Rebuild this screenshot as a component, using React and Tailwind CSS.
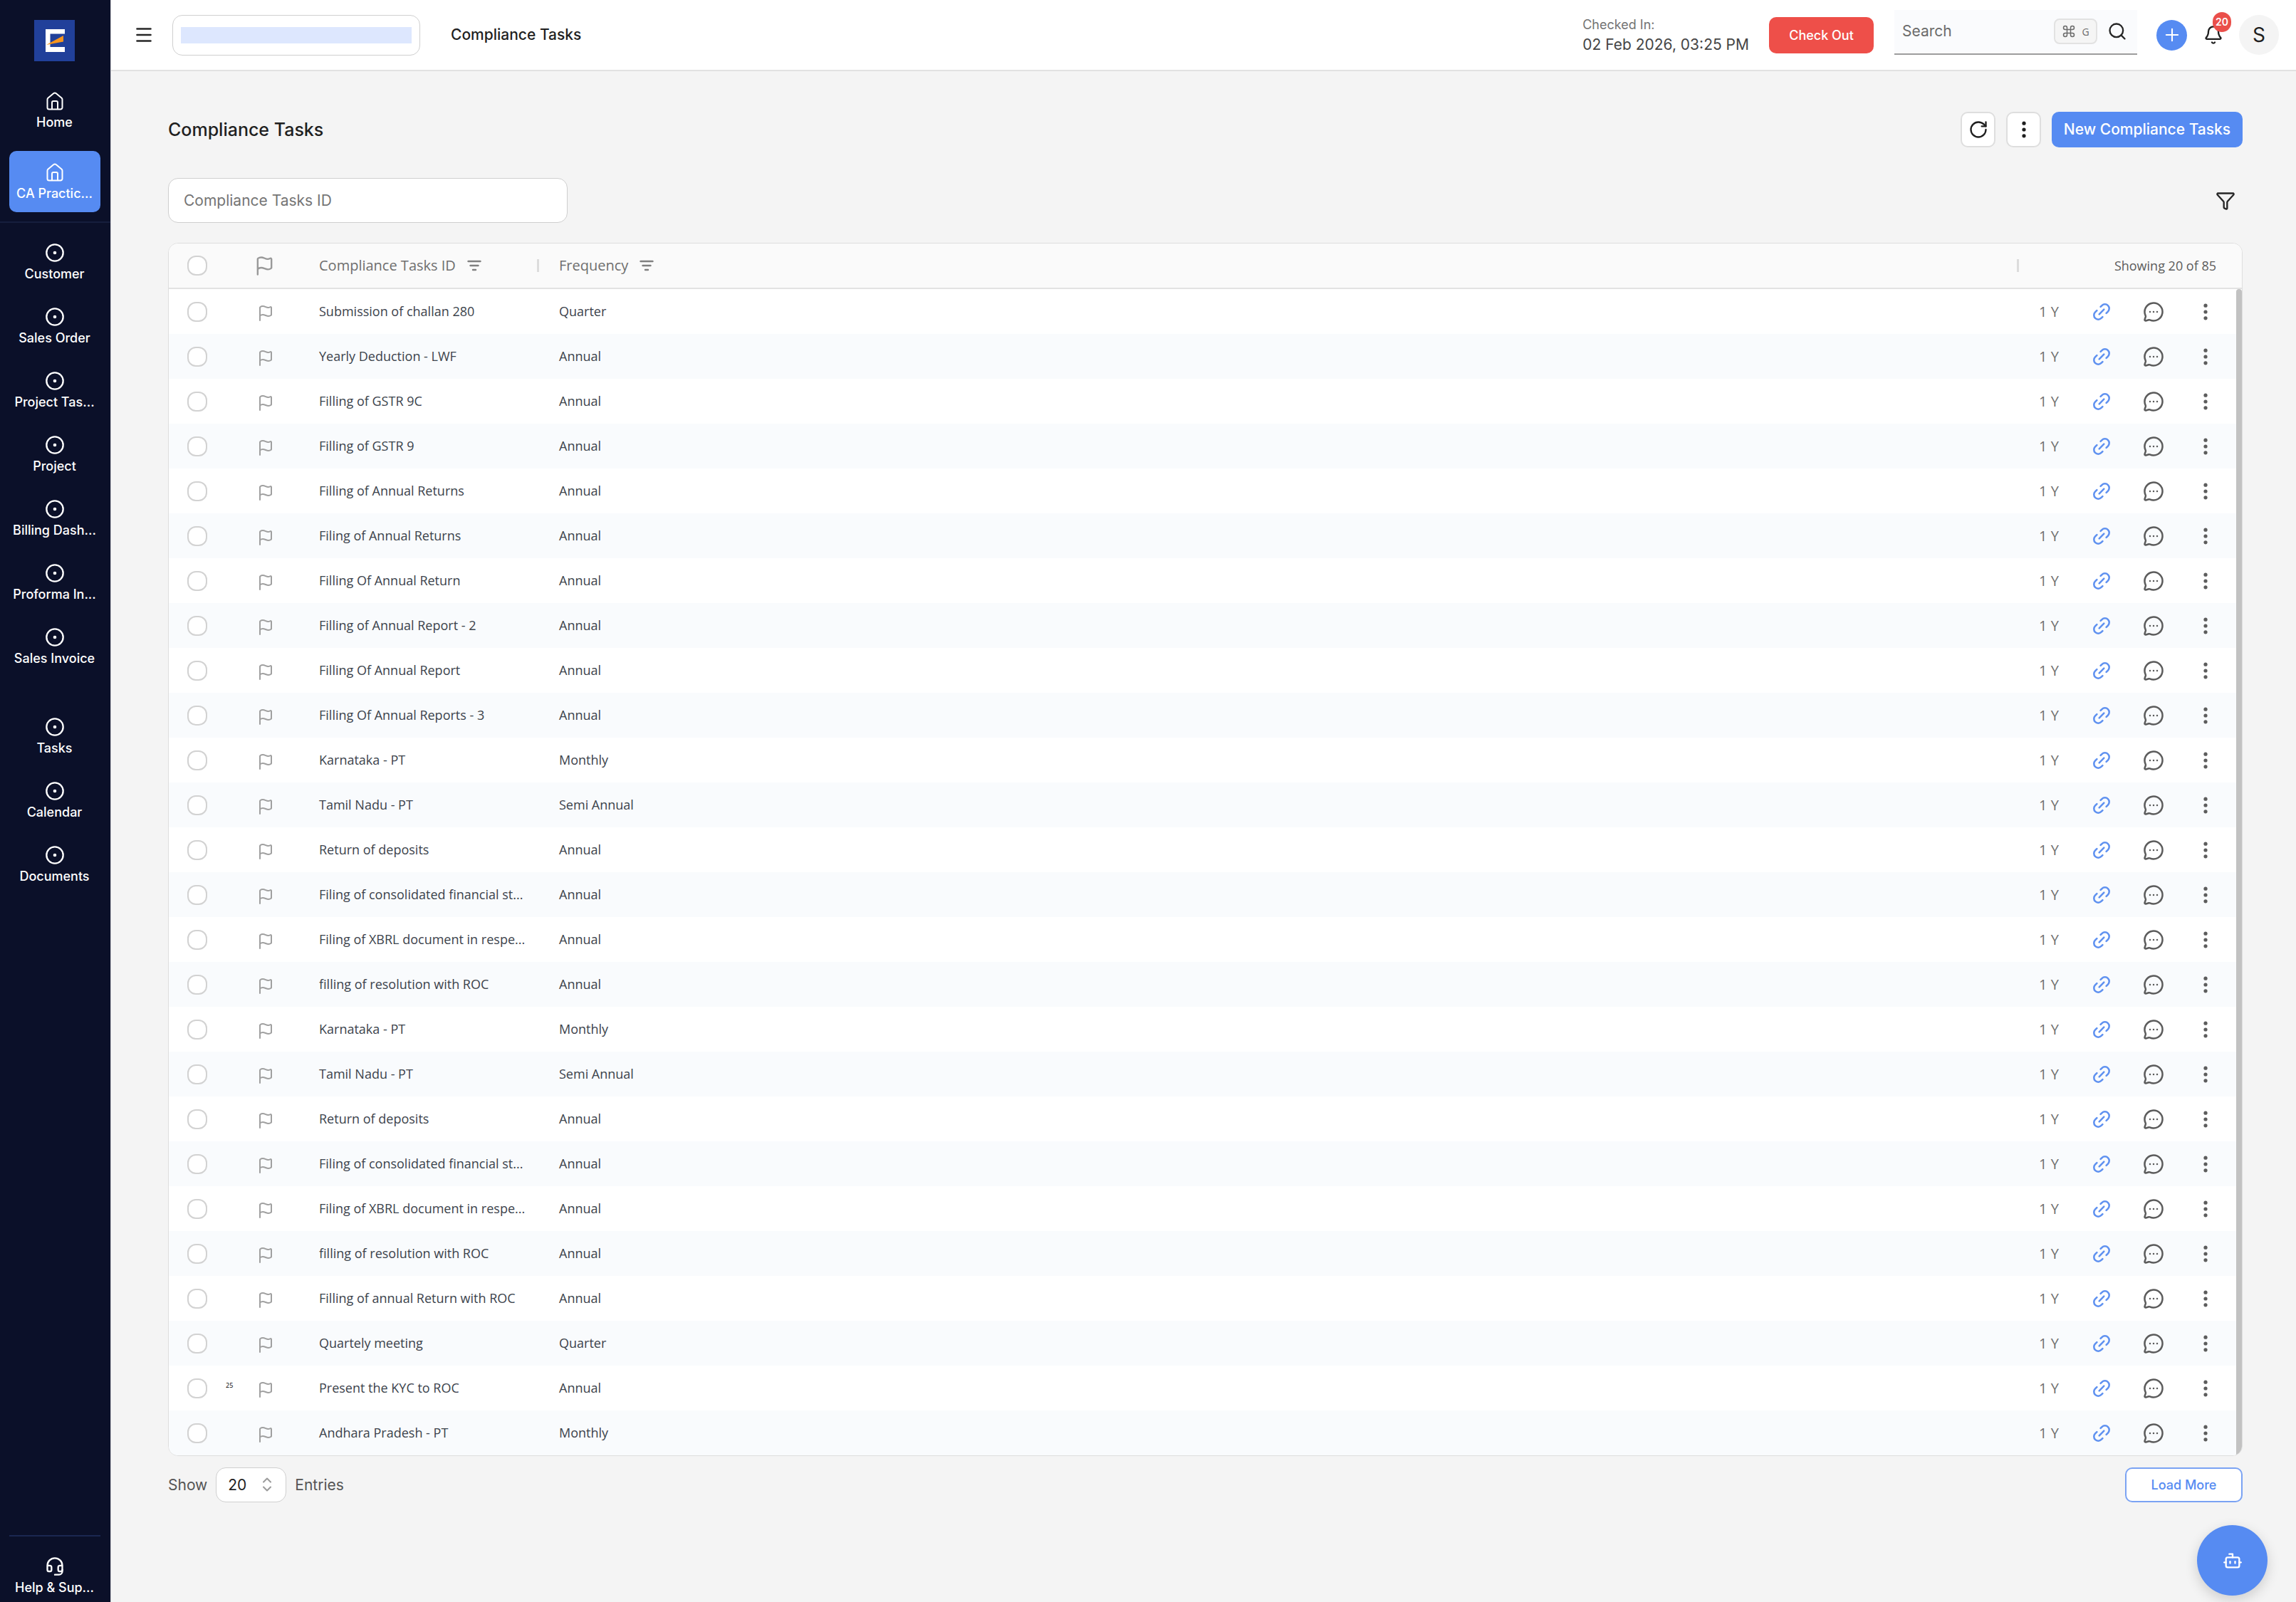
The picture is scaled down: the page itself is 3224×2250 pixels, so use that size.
import React from "react";
import {
  Bell,
  Bot,
  CircleDot,
  Command,
  Flag,
  Funnel,
  Headset,
  MessageCircleMore,
  Plus,
  RotateCw,
  Search,
} from "lucide-react";

const mainLinks = [
  "Customer",
  "Sales Order",
  "Project Tas...",
  "Project",
  "Billing Dash...",
  "Proforma In...",
  "Sales Invoice",
];

const toolLinks = ["Tasks", "Calendar", "Documents"];

const tasks = [
  { name: "Submission of challan 280", frequency: "Quarter" },
  { name: "Yearly Deduction - LWF", frequency: "Annual" },
  { name: "Filling of GSTR 9C", frequency: "Annual" },
  { name: "Filling of GSTR 9", frequency: "Annual" },
  { name: "Filling of Annual Returns", frequency: "Annual" },
  { name: "Filing of Annual Returns", frequency: "Annual" },
  { name: "Filling Of Annual Return", frequency: "Annual" },
  { name: "Filling of Annual Report - 2", frequency: "Annual" },
  { name: "Filling Of Annual Report", frequency: "Annual" },
  { name: "Filling Of Annual Reports - 3", frequency: "Annual" },
  { name: "Karnataka - PT", frequency: "Monthly" },
  { name: "Tamil Nadu - PT", frequency: "Semi Annual" },
  { name: "Return of deposits", frequency: "Annual" },
  { name: "Filing of consolidated financial st...", frequency: "Annual" },
  { name: "Filing of XBRL document in respe...", frequency: "Annual" },
  { name: "filling of resolution with ROC", frequency: "Annual" },
  { name: "Karnataka - PT", frequency: "Monthly" },
  { name: "Tamil Nadu - PT", frequency: "Semi Annual" },
  { name: "Return of deposits", frequency: "Annual" },
  { name: "Filing of consolidated financial st...", frequency: "Annual" },
  { name: "Filing of XBRL document in respe...", frequency: "Annual" },
  { name: "filling of resolution with ROC", frequency: "Annual" },
  { name: "Filling of annual Return with ROC", frequency: "Annual" },
  { name: "Quartely meeting", frequency: "Quarter" },
  { name: "Present the KYC to ROC", frequency: "Annual", note: "25" },
  { name: "Andhara Pradesh - PT", frequency: "Monthly" },
];

const Logo = () => (
  <svg viewBox="0 0 57 58" className="w-[57px] h-[58px]" aria-hidden="true">
    <rect width="57" height="58" fill="#21409a" />
    <path d="M16 13h27v6.500H22.500V38H43v7H16z" fill="#fff" />
    <path d="M17 35 41 22v8.500z" fill="#f7941d" />
  </svg>
);

const HomeIcon = () => (
  <svg
    viewBox="0 0 28 28"
    className="w-7 h-7"
    fill="none"
    stroke="currentColor"
    strokeWidth="2"
    strokeLinejoin="round"
    aria-hidden="true"
  >
    <path d="M3.500 11.800a3 3 0 0 1 1.100-2.300l7.500-6.300a3 3 0 0 1 3.800 0l7.500 6.300a3 3 0 0 1 1.100 2.300V23a2.500 2.500 0 0 1-2.500 2.500H6A2.500 2.500 0 0 1 3.500 23z" />
    <path d="M10 25.500V16a2 2 0 0 1 2-2h4a2 2 0 0 1 2 2v9.500" />
  </svg>
);

const SortIcon = () => (
  <svg
    viewBox="0 0 20 16"
    className="w-5 h-4"
    stroke="#808080"
    strokeWidth="2.400"
    strokeLinecap="round"
    aria-hidden="true"
  >
    <path d="M1.500 2h17M4.500 8h11M8 14h4" />
  </svg>
);

const LinkIcon = () => (
  <svg
    viewBox="0 0 24 24"
    className="w-8 h-8"
    fill="none"
    stroke="currentColor"
    strokeWidth="1.900"
    strokeLinecap="round"
    aria-hidden="true"
  >
    <g transform="rotate(-45 12 12)">
      <path d="M9 16.500H7a4.500 4.500 0 0 1 0-9h2.500" />
      <path d="M15 7.500h2a4.500 4.500 0 0 1 0 9h-2.500" />
      <path d="M8.500 12h7" />
    </g>
  </svg>
);

const DotsIcon = () => (
  <svg
    viewBox="0 0 24 24"
    className="w-6 h-6"
    fill="currentColor"
    aria-hidden="true"
  >
    <circle cx="12" cy="3.200" r="2.600" />
    <circle cx="12" cy="12" r="2.600" />
    <circle cx="12" cy="20.800" r="2.600" />
  </svg>
);

const NavItem = ({ label, icon, active }) => (
  <a
    href="#"
    className={`flex flex-col items-center gap-1 h-[86px] pt-4 w-[128px] rounded-[10px] text-white text-[18px] leading-6 font-medium whitespace-nowrap ${
      active ? "bg-[#568bf2]" : ""
    }`}
  >
    {icon || <CircleDot className="w-7 h-7" strokeWidth={2} />}
    <span>{label}</span>
  </a>
);

const Checkbox = ({ label }) => (
  <input
    type="checkbox"
    aria-label={label}
    className="appearance-none block w-7 h-7 rounded-[12px] border-2 border-[#d2d2d2] bg-white"
  />
);

const Sidebar = () => (
  <aside className="w-[156px] shrink-0 flex flex-col items-center bg-[#0b1029] border-r border-[#c9c9cf] pt-7 pr-0.5">
    <Logo />
    <nav className="mt-[26px] flex flex-col items-center gap-[14px]">
      <NavItem label="Home" icon={<HomeIcon />} />
      <NavItem label="CA Practic..." icon={<HomeIcon />} active />
    </nav>
    <hr className="w-[155px] -mr-0.5 mt-[13px] border-t-2 border-[#161e3d]" />
    <nav className="mt-3 flex flex-col gap-1">
      {mainLinks.map((label) => (
        <NavItem key={label} label={label} />
      ))}
    </nav>
    <nav className="mt-10 flex flex-col gap-1">
      {toolLinks.map((label) => (
        <NavItem key={label} label={label} />
      ))}
    </nav>
    <div className="mt-auto w-[128px] border-t-2 border-[#1b2750]">
      <a
        href="#"
        className="flex flex-col items-center gap-1 pt-7 pb-2 text-white text-[18px] leading-6 font-medium whitespace-nowrap"
      >
        <Headset className="w-7 h-7" strokeWidth={2} />
        <span>Help &amp; Sup...</span>
      </a>
    </div>
  </aside>
);

const Header = () => (
  <header className="h-[100px] flex items-center bg-white border-b-2 border-[#e2e2e2] pl-[35px] pr-6">
    <button type="button" aria-label="Toggle menu">
      <svg
        viewBox="0 0 22 20"
        className="w-[22px] h-5"
        stroke="#262626"
        strokeWidth="2.600"
        strokeLinecap="round"
      >
        <path d="M1.500 1.500h19M1.500 10h19M1.500 18.500h19" />
      </svg>
    </button>
    <div className="ml-[29px] w-[348px] h-[57px] px-[11px] py-4 rounded-[14px] border border-[#cfcfcf]">
      <div className="h-full bg-[#dde7fe]" />
    </div>
    <h2 className="ml-[43px] text-[21px] leading-7 font-medium text-[#1f1f1f]">
      Compliance Tasks
    </h2>

    <div className="ml-auto">
      <p className="text-[18px] leading-7 text-[#737373]">Checked In:</p>
      <p className="text-[21px] leading-7 text-[#454545]">
        02 Feb 2026, 03:25 PM
      </p>
    </div>
    <button
      type="button"
      className="ml-7 w-[147px] h-[51px] rounded-[10px] bg-[#ee4f49] text-white text-[18px] font-medium"
    >
      Check Out
    </button>

    {/* Search */}
    <label className="ml-[29px] mb-2 w-[341px] h-[63px] flex items-center pl-[11px] pr-[14px] bg-[#fafbfd] border-b-2 border-[#9d9d9d]">
      <input
        type="text"
        aria-label="Search"
        placeholder="Search"
        className="min-w-0 flex-1 text-[21px] leading-7 outline-none placeholder:text-[#6b6b6b]"
      />
      <kbd className="w-[61px] h-9 flex items-center justify-center gap-2 rounded-lg border-2 border-[#e2e2e2] bg-[#f5f5f5] text-[#6b6b6b] font-['Open_Sans',sans-serif] text-[14px]">
        <Command className="w-5 h-5" strokeWidth={1.8} />G
      </kbd>
      <Search className="ml-[14px] w-7 h-7 text-[#262626]" strokeWidth={2} />
    </label>

    <div className="ml-[27px] flex items-center gap-[15px]">
      <button
        type="button"
        aria-label="Add"
        className="w-[43px] h-[43px] rounded-full bg-[#568bf2] text-white flex items-center justify-center"
      >
        <Plus className="w-7 h-7" strokeWidth={1.8} />
      </button>
      <button
        type="button"
        aria-label="Notifications"
        className="relative w-[43px] h-[43px] flex items-center justify-center text-[#1f1f1f]"
      >
        <Bell className="w-7 h-7" strokeWidth={2} />
        <span className="absolute -top-[11px] left-[21px] w-[26px] h-7 rounded-full bg-[#ea4f4a] text-white text-[14px] leading-7 font-semibold text-center">
          20
        </span>
      </button>
      <button
        type="button"
        className="w-14 h-14 rounded-full bg-[#f4f4f4] text-[#1f1f1f] text-[28px]"
      >
        S
      </button>
    </div>
  </header>
);

const TaskTable = () => (
  <div className="relative mt-7 rounded-[14px] border border-[#dedede] overflow-hidden bg-white font-['Open_Sans',sans-serif] text-[18px] text-[#3c434c]">
    <table className="w-full table-fixed border-separate border-spacing-0 text-left">
      <colgroup>
        <col className="w-[108px]" />
        <col className="w-[103px]" />
        <col className="w-[337px]" />
        <col />
        <col className="w-[51px]" />
        <col className="w-[73px]" />
        <col className="w-[73px]" />
        <col className="w-[88px]" />
      </colgroup>
      <thead>
        <tr className="bg-[#fafafa] text-[#6f6f6f] text-[20px] *:h-16 *:border-b-2 *:border-[#e2e2e2] *:font-normal">
          <th className="pl-[26px]">
            <Checkbox label="Select all" />
          </th>
          <th className="pl-3">
            <Flag className="w-[29px] h-[29px] text-[#999]" strokeWidth={2} />
          </th>
          <th className="pr-7">
            <div className="flex items-center gap-4">
              <span>Compliance Tasks ID</span>
              <SortIcon />
              <span className="ml-auto w-[3px] h-[18px] bg-[#dcdcdc]" />
            </div>
          </th>
          <th className="pr-7">
            <div className="flex items-center gap-4">
              <span>Frequency</span>
              <SortIcon />
              <span className="ml-auto w-[3px] h-[18px] bg-[#dcdcdc]" />
            </div>
          </th>
          <th colSpan={4} className="pr-9">
            <div className="text-right text-[18px] text-[#5c5c5c] font-medium">
              Showing 20 of 85
            </div>
          </th>
        </tr>
      </thead>
      <tbody>
        {tasks.map((task, index) => (
          <tr key={index} className="even:bg-[#f9fbfd] *:h-[63px]">
            <td className="pl-[26px]">
              <div className="flex items-center gap-[26px]">
                <Checkbox label={`Select ${task.name}`} />
                {task.note && (
                  <span className="mb-2 text-[9px] leading-3 text-black">
                    {task.note}
                  </span>
                )}
              </div>
            </td>
            <td className="pl-4">
              <Flag className="mt-1 w-6 h-6 text-[#a0a0a0]" strokeWidth={2} />
            </td>
            <td className="whitespace-nowrap">{task.name}</td>
            <td>{task.frequency}</td>
            <td className="text-[20px] text-[#6f6f6f]">1 Y</td>
            <td>
              <button
                type="button"
                aria-label="Copy link"
                className="mx-auto block text-[#5f91f0]"
              >
                <LinkIcon />
              </button>
            </td>
            <td>
              <button
                type="button"
                aria-label="Comments"
                className="mx-auto block text-[#5c5c5c]"
              >
                <MessageCircleMore className="w-[30px] h-[30px]" strokeWidth={2} />
              </button>
            </td>
            <td className="pr-[15px]">
              <button
                type="button"
                aria-label="Row menu"
                className="mx-auto block text-[#5c5c5c]"
              >
                <DotsIcon />
              </button>
            </td>
          </tr>
        ))}
      </tbody>
    </table>
    {/* Scroll thumb */}
    <div className="absolute right-0 top-16 bottom-0 w-2 rounded-t-full bg-[#c2c2c2]" />
  </div>
);

const App = () => {
  return (
    <div className="min-h-screen flex bg-[#f4f4f4] font-['Inter',sans-serif]">
      <Sidebar />
      <div className="flex-1 min-w-0">
        <Header />
        <main className="pl-20 pr-[75px] pt-[57px] pb-10">
          <div className="flex items-center gap-[15px]">
            <h1 className="mr-auto text-[25px] leading-8 font-medium text-[#1f1f1f]">
              Compliance Tasks
            </h1>
            <button
              type="button"
              aria-label="Refresh"
              className="w-[49px] h-[50px] flex items-center justify-center rounded-[10px] border-2 border-[#dedede] bg-white text-[#1f1f1f]"
            >
              <RotateCw className="w-7 h-7" strokeWidth={2} />
            </button>
            <button
              type="button"
              aria-label="More actions"
              className="w-[49px] h-[50px] flex items-center justify-center rounded-[10px] border-2 border-[#dedede] bg-white text-[#1f1f1f]"
            >
              <DotsIcon />
            </button>
            <button
              type="button"
              className="h-[50px] w-[268px] rounded-[10px] bg-[#568bf2] text-white text-[21px] font-medium"
            >
              New Compliance Tasks
            </button>
          </div>

          {/* Filters */}
          <div className="mt-[43px] flex items-center justify-between">
            <input
              type="text"
              aria-label="Compliance Tasks ID"
              placeholder="Compliance Tasks ID"
              className="w-[561px] h-[63px] px-[21px] rounded-[14px] border border-[#cfcfcf] bg-white text-[21px] placeholder:text-[#757575]"
            />
            <button
              type="button"
              aria-label="Filter"
              className="mr-[10px] text-[#262626]"
            >
              <Funnel className="w-7 h-7" strokeWidth={2} />
            </button>
          </div>

          <TaskTable />

          {/* Pagination */}
          <div className="mt-4 flex items-center gap-3 text-[21px] text-[#555]">
            <label htmlFor="entries">Show</label>
            <div className="relative">
              <select
                id="entries"
                className="appearance-none block w-[99px] h-[49px] pl-4 rounded-[14px] border border-[#cfcfcf] bg-white text-[#1f1f1f] text-[21px]"
              >
                <option>20</option>
                <option>50</option>
                <option>100</option>
              </select>
              <svg
                viewBox="0 0 14 20"
                className="absolute right-5 top-[14px] w-[14px] h-5 pointer-events-none"
                fill="none"
                stroke="#9a9a9a"
                strokeWidth="2"
                strokeLinecap="round"
                strokeLinejoin="round"
              >
                <path d="M2 6.500 7 1.500l5 5M2 13.500l5 5 5-5" />
              </svg>
            </div>
            <span>Entries</span>
            <button
              type="button"
              className="ml-auto w-[165px] h-[49px] rounded-[10px] border-2 border-[#7ba3f3] bg-white text-[#568bf2] text-[18px] font-medium"
            >
              Load More
            </button>
          </div>
        </main>
      </div>

      {/* Assistant */}
      <button
        type="button"
        aria-label="Open assistant"
        className="fixed right-10 bottom-[9px] w-[99px] h-[99px] rounded-full bg-[#568bf2] text-white flex items-center justify-center shadow-[0_6px_18px_rgba(0,0,0,0.16)]"
      >
        <Bot className="w-7 h-7" strokeWidth={2} />
      </button>
    </div>
  );
};

export default App;
